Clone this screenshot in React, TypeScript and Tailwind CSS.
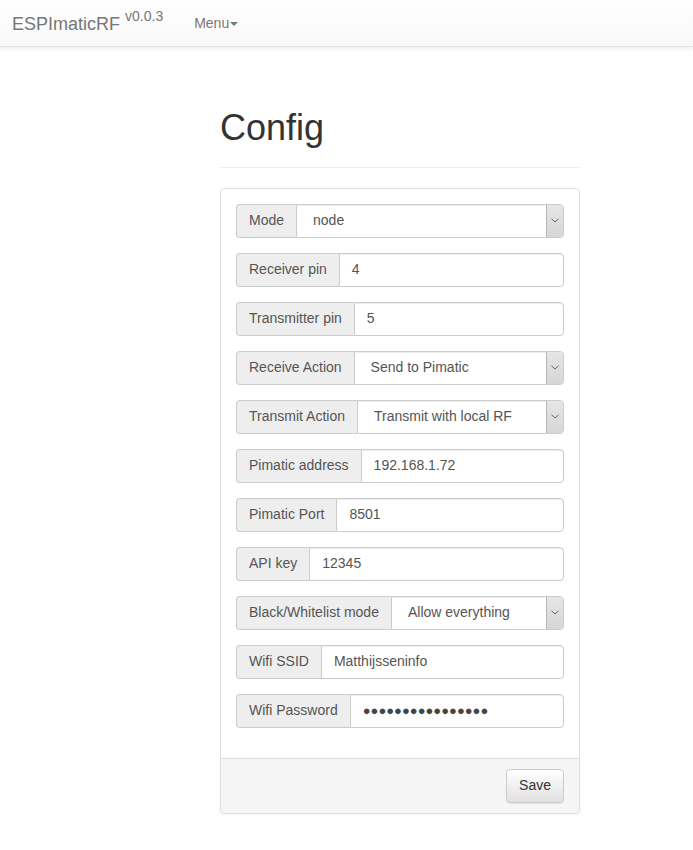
import React from "react";

const font = { fontFamily: '"Liberation Sans", Arial, sans-serif' };

type Field = { label: string; value: string; kind: "input" | "select" | "password" };

const fields: Field[] = [
  { label: "Mode", value: "node", kind: "select" },
  { label: "Receiver pin", value: "4", kind: "input" },
  { label: "Transmitter pin", value: "5", kind: "input" },
  { label: "Receive Action", value: "Send to Pimatic", kind: "select" },
  { label: "Transmit Action", value: "Transmit with local RF", kind: "select" },
  { label: "Pimatic address", value: "192.168.1.72", kind: "input" },
  { label: "Pimatic Port", value: "8501", kind: "input" },
  { label: "API key", value: "12345", kind: "input" },
  { label: "Black/Whitelist mode", value: "Allow everything", kind: "select" },
  { label: "Wifi SSID", value: "Matthijsseninfo", kind: "input" },
  { label: "Wifi Password", value: "●●●●●●●●●●●●●●●●", kind: "password" },
];

function Navbar() {
  return (
    <div className="h-[47px] flex items-center bg-gradient-to-b from-white to-[#f8f8f8] shadow-[0_1px_5px_rgba(0,0,0,0.1)] border-b border-[#e4e4e4]">
      <div className="pl-[12px] text-[18px] text-[#777] leading-none flex items-start">
        <span className="mt-[2px]">ESPImaticRF</span>
        <span className="text-[14px] ml-[5px] -mt-[4px]">v0.0.3</span>
      </div>
      <div className="ml-[31px] text-[14px] text-[#777] flex items-center">
        Menu
        <span className="ml-[1px] mt-[1px] w-0 h-0 border-l-[4px] border-r-[4px] border-t-[4px] border-l-transparent border-r-transparent border-t-[#777]" />
      </div>
    </div>
  );
}

function Row({ f }: { f: Field }) {
  return (
    <div className="flex h-[34px] mb-[15px] text-[14px]">
      <div className="flex items-center px-[12px] bg-[#eee] border border-[#ccc] border-r-0 rounded-l-[4px] text-[#555] whitespace-nowrap">
        {f.label}
      </div>
      {f.kind === "select" ? (
        <div className="flex-1 flex border border-[#ccc] rounded-r-[4px] bg-white shadow-[inset_0_1px_1px_rgba(0,0,0,0.075)] overflow-hidden">
          <div className="flex-1 flex items-center pl-[16px] text-[#555]">{f.value}</div>
          <div className="w-[17px] flex items-center justify-center bg-gradient-to-b from-[#e6e6e6] to-[#d6d6d6] border-l border-[#b5b5b5]">
            <svg width="8" height="5" viewBox="0 0 8 5">
              <path d="M0.5 0.8 L4 4 L7.5 0.8" fill="none" stroke="#666" strokeWidth="1" />
            </svg>
          </div>
        </div>
      ) : (
        <div className="flex-1 flex items-center px-[12px] border border-[#ccc] rounded-r-[4px] bg-white shadow-[inset_0_1px_1px_rgba(0,0,0,0.075)] text-[#555]">
          {f.kind === "password" ? (
            <span className="text-[13px] text-[#444]">{f.value}</span>
          ) : (
            f.value
          )}
        </div>
      )}
    </div>
  );
}

export default function App() {
  return (
    <div className="min-h-[850px] bg-white text-[#333]" style={font}>
      <Navbar />
      <div className="ml-[220px] w-[360px]">
        <div className="mt-[61px] pb-[9px] border-b border-[#eee] mb-[20px]">
          <h1 className="text-[36px] leading-[1.1] font-normal mb-[10px]">Config</h1>
        </div>
        <div className="border border-[#ddd] rounded-[4px] shadow-[0_1px_2px_rgba(0,0,0,0.05)]">
          <div className="p-[15px]">
            {fields.map((f) => (
              <Row key={f.label} f={f} />
            ))}
          </div>
          <div className="bg-[#f5f5f5] border-t border-[#ddd] px-[15px] py-[10px] flex justify-end rounded-b-[4px]">
            <button className="h-[34px] px-[12px] text-[14px] text-[#333] border border-[#ccc] rounded-[4px] bg-gradient-to-b from-white to-[#e0e0e0] shadow-[0_1px_1px_rgba(0,0,0,0.075)]">
              Save
            </button>
          </div>
        </div>
      </div>
    </div>
  );
}
